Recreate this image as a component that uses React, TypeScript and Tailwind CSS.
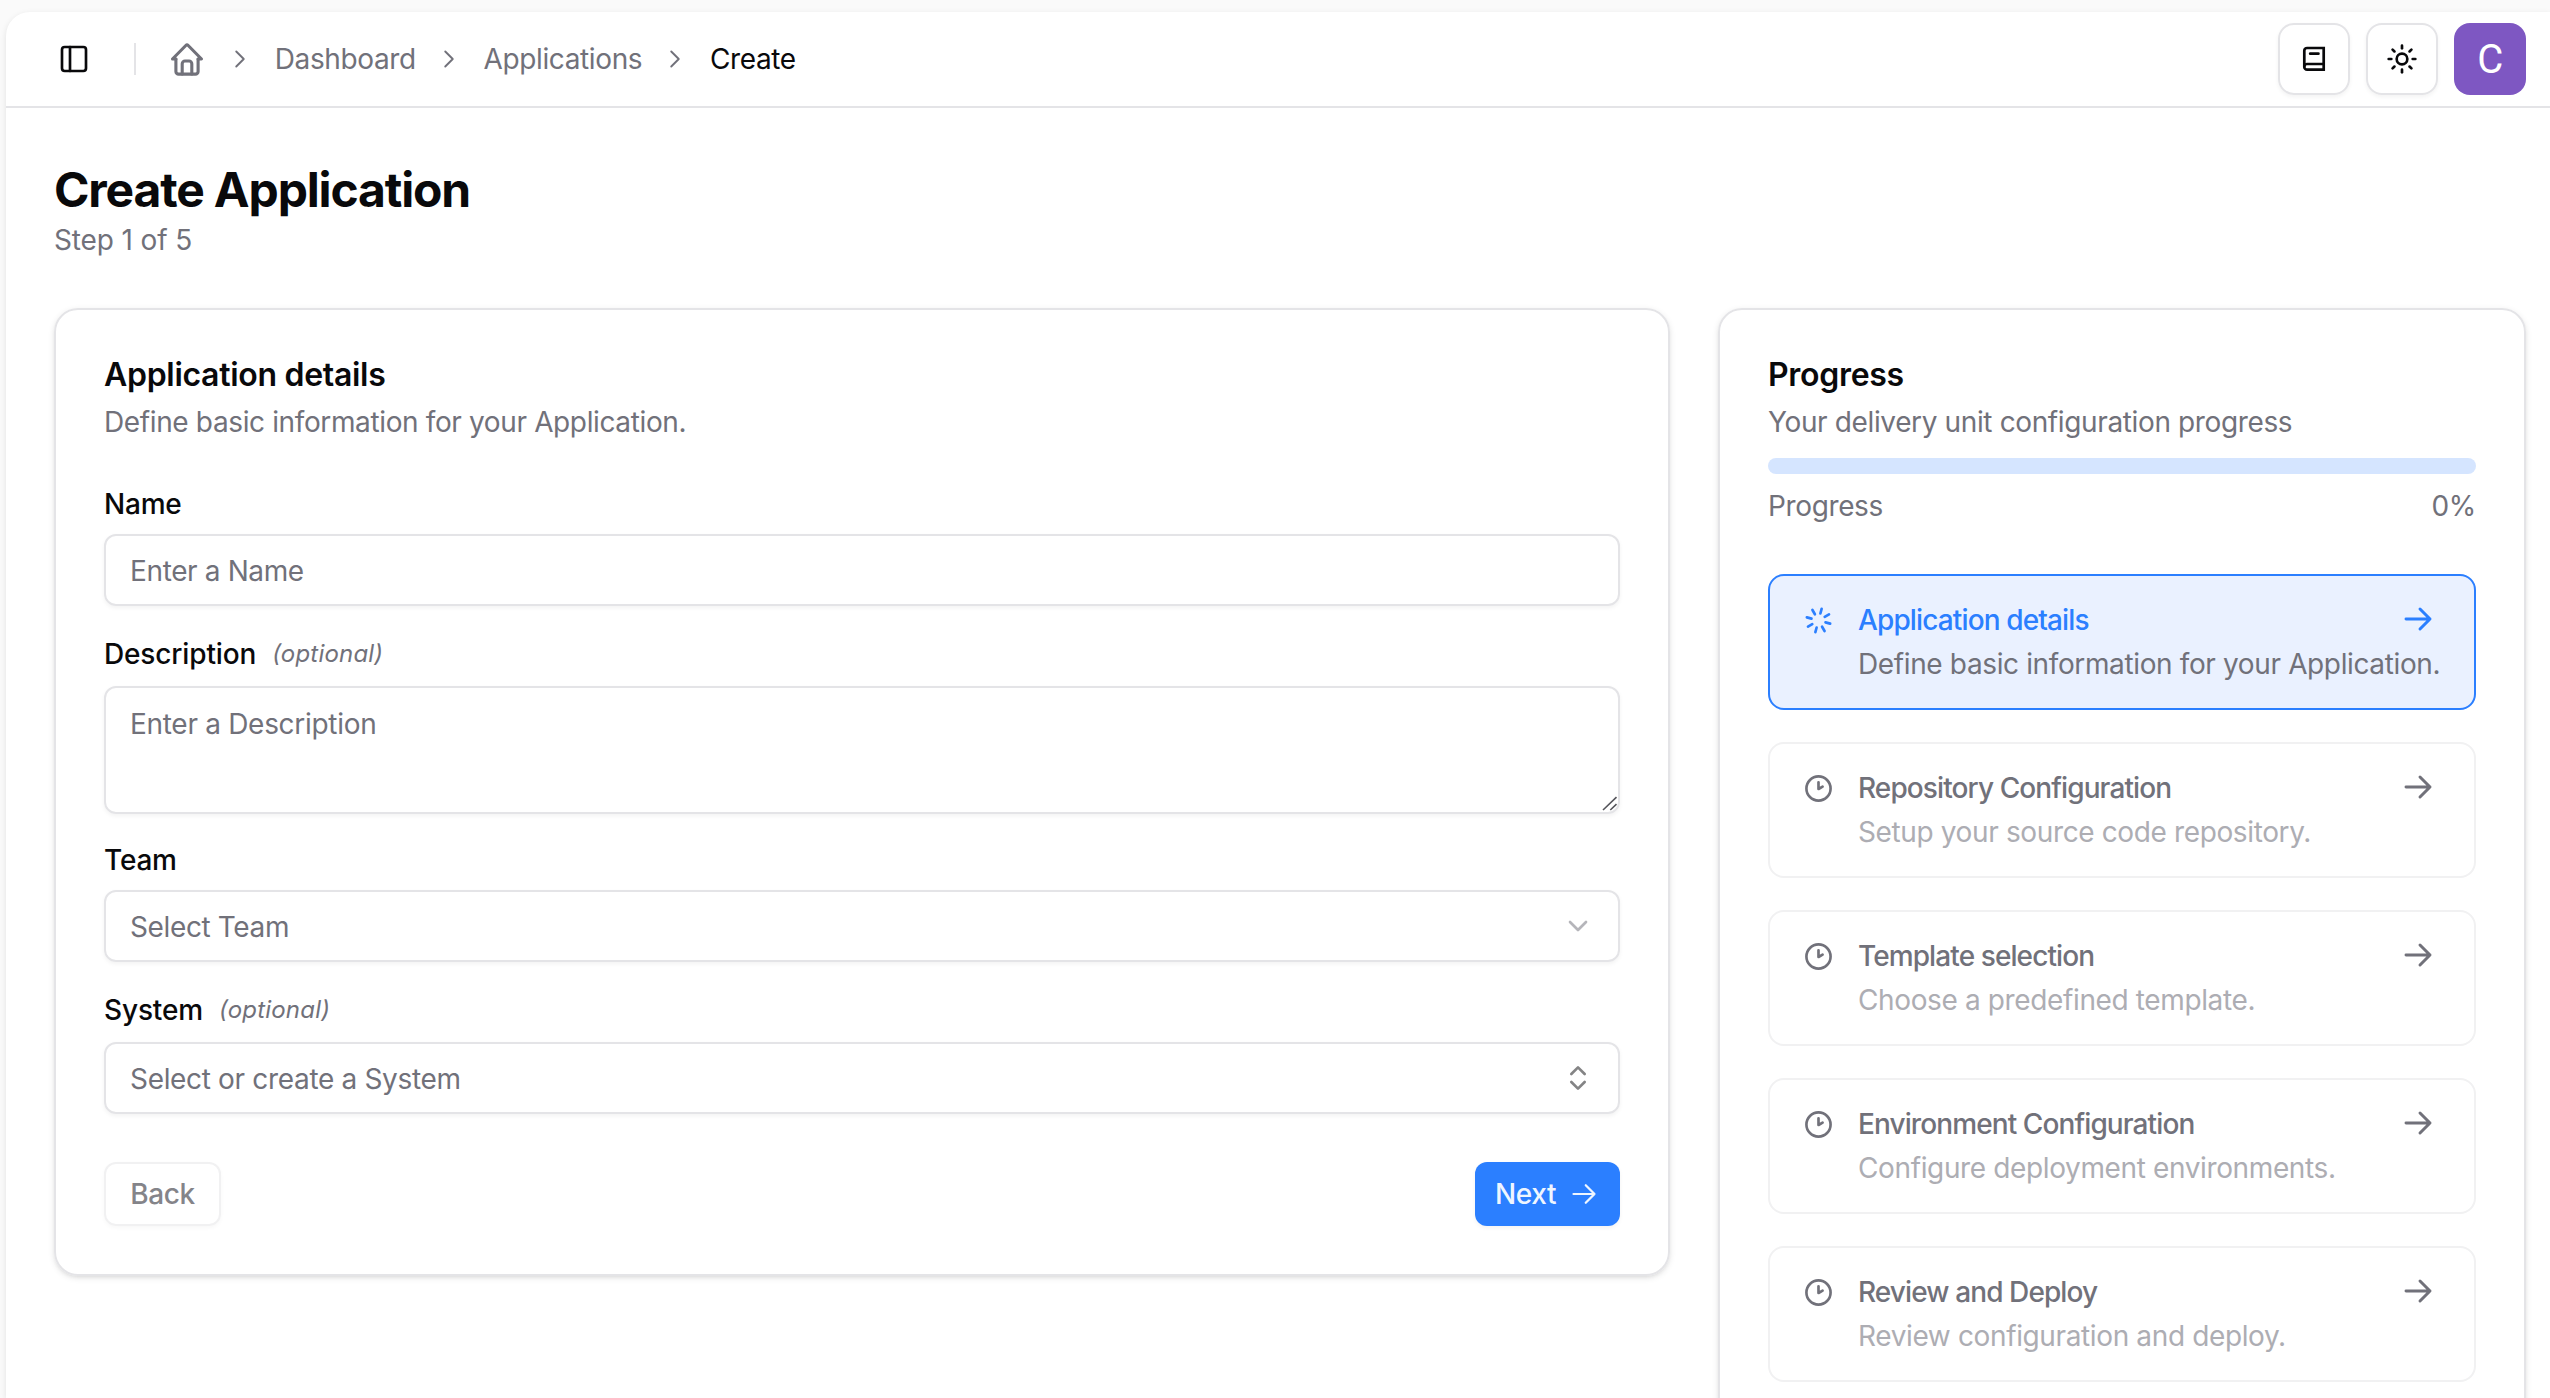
import { ChevronDown, ChevronsUpDown, PanelLeft, Sun } from "lucide-react";
import { ReactNode } from "react";

const steps = [
  { title: "Repository Configuration", text: "Setup your source code repository." },
  { title: "Template selection", text: "Choose a predefined template." },
  { title: "Environment Configuration", text: "Configure deployment environments." },
  { title: "Review and Deploy", text: "Review configuration and deploy." },
];

function HomeIcon() {
  return (
    <svg viewBox="0 0 36 36" fill="none" stroke="currentColor" strokeWidth={3.1} strokeLinecap="round" strokeLinejoin="round" className="size-9">
      <path d="M6.9 18H3.5L16.8 4.5a1.7 1.7 0 0 1 2.4 0L32.5 18h-3.4" />
      <path d="M6.9 18v12.4a2.7 2.7 0 0 0 2.7 2.7h16.8a2.7 2.7 0 0 0 2.7-2.7V18" />
      <path d="M13.2 33V22.8a2.8 2.8 0 0 1 2.8-2.8h4a2.8 2.8 0 0 1 2.8 2.8V33" />
    </svg>
  );
}

function BookIcon() {
  return (
    <svg viewBox="0 0 36 36" fill="none" stroke="currentColor" strokeWidth={2.7} className="size-9">
      <path d="M27.7 7v21.7H11.1a2.8 2.8 0 0 1-2.8-2.8V9.8A2.8 2.8 0 0 1 11.1 7z" />
      <path d="M8.3 25.8a2.8 2.8 0 0 1 2.8-2.8h16.6" />
      <path d="M14.2 12.7h8.2" strokeLinecap="round" />
    </svg>
  );
}

function Chevron() {
  return (
    <svg viewBox="0 0 24 24" fill="none" stroke="currentColor" strokeWidth={1.9} strokeLinecap="round" strokeLinejoin="round" className="ml-[21px] mr-[22.7px] size-6">
      <path d="m8.25 4.5 7.5 7.5-7.5 7.5" />
    </svg>
  );
}

function Arrow({ className, strokeWidth }: { className: string; strokeWidth: number }) {
  return (
    <svg viewBox="0 0 24 24" fill="none" stroke="currentColor" strokeWidth={strokeWidth} strokeLinecap="round" strokeLinejoin="round" className={className}>
      <path d="M13.5 4.5 21 12l-7.5 7.5M21 12H3" />
    </svg>
  );
}

function SpinnerIcon() {
  return (
    <svg viewBox="0 0 24 24" fill="none" stroke="currentColor" strokeWidth={2.2} strokeLinecap="round" className="size-[29px]">
      <g transform="rotate(15 12 12)">
        <path d="M12 2v4M12 18v4M2 12h4M18 12h4M4.9 4.9l2.9 2.9M16.2 16.2l2.9 2.9M4.9 19.1l2.9-2.9M16.2 7.8l2.9-2.9" />
      </g>
    </svg>
  );
}

function ClockIcon() {
  return (
    <svg viewBox="0 0 24 24" fill="none" stroke="currentColor" strokeWidth={2.2} strokeLinecap="round" strokeLinejoin="round" className="size-[29px]">
      <circle cx="12" cy="12" r="10" />
      <path d="M12 6.8v5.6l3.4-2" />
    </svg>
  );
}

function Label({ children, optional }: { children: ReactNode; optional?: boolean }) {
  return (
    <div className={optional
      ? "flex h-8 items-center gap-4 text-[28px] font-medium tracking-[-0.15px]"
      : "flex h-7 items-center text-[28px] font-medium tracking-[-0.2px]"}>
      {children}
      {optional && <span className="text-2xl font-normal italic tracking-[0.2px] text-[#71717a]">(optional)</span>}
    </div>
  );
}

function Step({ title, text, active }: { title: string; text: string; active?: boolean }) {
  return (
    <div className={active
      ? "flex h-[136px] gap-6 rounded-2xl border-2 border-[#2b7fff] bg-[#eaf1ff] pl-8 pr-10 pt-6"
      : "flex h-[136px] gap-6 rounded-2xl border-2 border-[#f1f1f2] pl-8 pr-10 pt-6"}>
      <div className={active
        ? "mt-1 flex size-8 shrink-0 items-center justify-center text-[#2b7fff]"
        : "mt-1 flex size-8 shrink-0 items-center justify-center text-[#71717a]"}>
        {active ? <SpinnerIcon /> : <ClockIcon />}
      </div>
      <div className="min-w-0 flex-1">
        <div className={active
          ? "flex h-10 items-center justify-between text-[28px] font-medium tracking-[-0.87px] text-[#2b7fff]"
          : "flex h-10 items-center justify-between text-[28px] font-medium tracking-[-0.9px] text-[#71717a]"}>
          {title}
          <Arrow className="mb-0.5 size-8" strokeWidth={2.2} />
        </div>
        <p className={active
          ? "mt-1 whitespace-nowrap text-[28px] leading-10 text-[#71717a]"
          : "mt-1 whitespace-nowrap text-[28px] leading-10 text-[#adadb3]"}>{text}</p>
      </div>
    </div>
  );
}

export default function App() {
  return (
    <div className="h-[1398px] overflow-hidden bg-[#fafafa] pl-1.5 pt-3 font-['Inter',sans-serif] tracking-[-0.37px] text-[#09090b]">
      <div className="h-full rounded-tl-3xl bg-white shadow-[0_2px_6px_rgba(0,0,0,0.1)]">
        <header className="flex h-24 items-center border-b-2 border-[#e4e4e7] pl-[52px] pr-6">
          <PanelLeft className="size-8" />
          <div className="ml-11 h-8 w-0.5 bg-[#e4e4e7]" />
          <nav className="ml-[33px] flex items-center text-[28px] text-[#71717a]">
            <HomeIcon />
            <div className="w-0.5" />
            <Chevron />
            <a href="#">Dashboard</a>
            <Chevron />
            <a href="#">Applications</a>
            <Chevron />
            <span className="text-[#09090b]">Create</span>
          </nav>
          <div className="ml-auto flex gap-4">
            <button className="flex size-[72px] items-center justify-center rounded-2xl border-2 border-[#e4e4e7] shadow-[0_2px_4px_rgba(0,0,0,0.05)]">
              <BookIcon />
            </button>
            <button className="flex size-[72px] items-center justify-center rounded-2xl border-2 border-[#e4e4e7] shadow-[0_2px_4px_rgba(0,0,0,0.05)]">
              <Sun className="size-8" />
            </button>
            <div className="flex size-[72px] items-center justify-center rounded-2xl bg-[#7e57c2] pt-0.5 font-[Roboto] text-[40px] text-white">C</div>
          </div>
        </header>

        <main className="pl-12 pr-6 pt-[52px]">
          <h1 className="text-5xl font-bold leading-[60px] tracking-[-1.15px]">Create Application</h1>
          <p className="text-[28px] leading-10 tracking-[-0.12px] text-[#71717a]">Step 1 of 5</p>

          <div className="mt-12 flex items-start gap-12">
            <section className="h-[968px] w-[1616px] shrink-0 rounded-3xl border-2 border-[#e4e4e7] p-12 shadow-[0_2px_6px_rgba(0,0,0,0.1),0_2px_4px_-2px_rgba(0,0,0,0.1)]">
              <h2 className="pt-px text-[32px] font-semibold leading-8 tracking-[-0.3px]">Application details</h2>
              <p className="mt-[11px] text-[28px] leading-10 text-[#71717a]">Define basic information for your Application.</p>
              <div className="mt-12">
                <Label>Name</Label>
                <input placeholder="Enter a Name" className="mt-4 block h-18 w-full rounded-xl border-2 border-[#e4e4e7] px-6 pt-0.5 text-[28px] shadow-[0_2px_4px_rgba(0,0,0,0.05)] placeholder:text-[#71717a]" />
              </div>
              <div className="mt-8">
                <Label optional>Description</Label>
                <div className="relative mt-4">
                  <textarea placeholder="Enter a Description" className="block h-32 w-full resize-none rounded-xl border-2 border-[#e4e4e7] px-6 py-4 text-[28px] leading-10 tracking-[-0.3px] shadow-[0_2px_4px_rgba(0,0,0,0.05)] placeholder:text-[#71717a]" />
                  <svg viewBox="0 0 16 16" fill="none" stroke="#55555b" strokeWidth={1.6} className="pointer-events-none absolute bottom-0.5 right-0.5 size-4">
                    <path d="M1 14 14.5 1.2M8.3 14l6.2-5.8" />
                  </svg>
                </div>
              </div>
              <div className="mt-8">
                <Label>Team</Label>
                <div className="mt-4 flex h-18 items-center justify-between rounded-xl border-2 border-[#e4e4e7] px-6 text-[28px] text-[#71717a] shadow-[0_2px_4px_rgba(0,0,0,0.05)]">
                  <span className="pt-0.5">Select Team</span>
                  <ChevronDown className="size-8 text-[#b5b5ba]" />
                </div>
              </div>
              <div className="mt-8">
                <Label optional>System</Label>
                <div className="mt-4 flex h-18 items-center justify-between rounded-xl border-2 border-[#e4e4e7] px-6 text-[28px] text-[#71717a] shadow-[0_2px_4px_rgba(0,0,0,0.05)]">
                  <span className="pt-0.5 tracking-[-0.33px]">Select or create a System</span>
                  <ChevronsUpDown className="size-8 text-[#848485]" />
                </div>
              </div>
              <div className="mt-12 flex justify-between text-[28px] font-medium">
                <button className="h-16 w-[117px] rounded-xl border-2 border-[#f1f1f2] text-[#848489] shadow-[0_2px_4px_rgba(0,0,0,0.03)]">Back</button>
                <button className="flex h-16 w-[145px] items-center justify-between rounded-xl bg-[#2b7fff] pl-5 pr-[22px] text-[#eff6ff] shadow-[0_2px_4px_rgba(0,0,0,0.05)]">
                  Next
                  <Arrow className="size-7" strokeWidth={1.9} />
                </button>
              </div>
            </section>

            <section className="h-[1200px] min-w-0 flex-1 rounded-3xl border-2 border-[#e4e4e7] p-12 shadow-[0_2px_6px_rgba(0,0,0,0.1),0_2px_4px_-2px_rgba(0,0,0,0.1)]">
              <h2 className="pt-px text-[32px] font-semibold leading-8 tracking-[-0.3px]">Progress</h2>
              <p className="mt-[11px] text-[28px] leading-10 text-[#71717a]">Your delivery unit configuration progress</p>
              <div className="mt-4 h-4 rounded-full bg-[#d5e5ff]" />
              <div className="mt-3 flex justify-between text-[28px] leading-10 text-[#71717a]">
                <span>Progress</span>
                <span>0%</span>
              </div>
              <div className="mt-12 flex flex-col gap-8">
                <Step active title="Application details" text="Define basic information for your Application." />
                {steps.map((s) => <Step key={s.title} title={s.title} text={s.text} />)}
              </div>
            </section>
          </div>
        </main>
      </div>
    </div>
  );
}
